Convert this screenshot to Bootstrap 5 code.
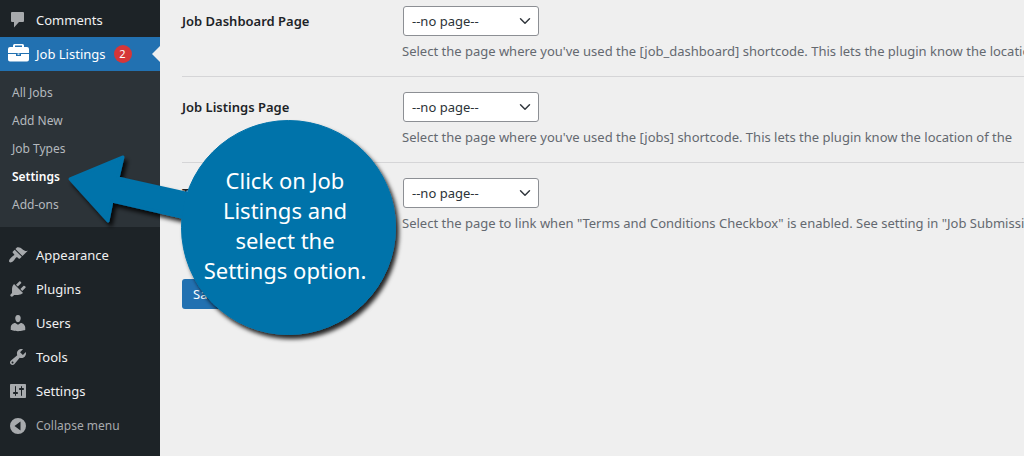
<!DOCTYPE html>
<html lang="en">
<head>
<meta charset="utf-8">
<meta name="viewport" content="width=device-width, initial-scale=1">
<title>Job Listings Settings</title>
<link href="https://cdn.jsdelivr.net/npm/bootstrap@5.3.0/dist/css/bootstrap.min.css" rel="stylesheet">
<style>
  body { font-family: "Noto Sans", "Open Sans", sans-serif; font-size: 13px; line-height: 18px; background: #efefef; color: #1d2327; }
  .admin-menu { flex: 0 0 160px; background: #1d2327; padding-top: 3px; }
  .menu-link { height: 34px; gap: 8px; padding-left: 8px; font-size: 13px; color: #f0f0f1; text-decoration: none; border: 0; background: none; }
  .menu-link svg { flex: 0 0 20px; width: 20px; height: 20px; fill: #a7aaad; }
  .menu-link.current { background: #2271b1; color: #fff; }
  .menu-link.current svg { fill: #fff; }
  .menu-link.current::after { content: ""; position: absolute; right: 0; top: 9px; border: 8px solid transparent; border-right-color: #efefef; border-left: 0; }
  .count { width: 18px; height: 18px; border-radius: 9px; background: #d63638; font-size: 11px; line-height: 18px; }
  .submenu { background: #2c3338; padding: 8px 0; margin-bottom: 11px; }
  .submenu a { display: flex; align-items: center; height: 28px; padding-left: 12px; color: #b4b9be; font-size: 12px; text-decoration: none; }
  .submenu a.current { color: #fff; font-weight: 600; }
  .collapse-btn { height: 36px; color: #a7aaad; font-size: 12px; }
  .settings { padding: 6px 0 0 22px; }
  .setting + .setting { border-top: 1px solid #d5d5d7; padding-top: 15px; }
  .setting { padding-bottom: 15px; }
  .setting-label { flex: 0 0 221px; font-size: 13px; font-weight: 600; line-height: 30px; }
  .page-select { width: 136px; height: 30px; padding: 0 24px 0 8px; border: 1px solid #8c8f94; border-radius: 3px; font-size: 13px; line-height: 28px; color: #2c3338; background-size: 12px 12px; background-position: right 7px center; }
  .hint { margin: 6px 0 0 -1px; color: #646970; font-size: 13px; line-height: 19px; }
  .save-btn { height: 30px; padding: 0 10px; border-radius: 3px; font-size: 13px; line-height: 28px; background: #2271b1; color: #fff; margin-top: 31px; }
  .callout { left: 60px; top: 110px; width: 350px; height: 240px; pointer-events: none; }
  .callout p { left: 117px; top: 55px; width: 216px; color: #fff; font-size: 22px; line-height: 30px; }
</style>
</head>
<body>
<div class="d-flex min-vh-100 position-relative overflow-hidden">
  <nav class="admin-menu" aria-label="Admin menu">
    <a href="#" class="menu-link d-flex align-items-center"><svg viewBox="0 0 20 20"><path d="M4 2h11q1 0 1 1v8q0 1-1 1h-4l-5 5.500v-5.500H4q-1 0-1-1V3q0-1 1-1z"/></svg>Comments</a>
    <a href="#" class="menu-link current d-flex align-items-center position-relative"><svg viewBox="0 0 20 20" overflow="visible"><path fill-rule="evenodd" d="M5 3V1.500Q5 0 6.500 0h8Q16 0 16 1.500V3h3q2 0 2 2v4H0V5q0-2 2-2zM7 1.500V3h7V1.500zM0 10h8v2h5v-2h8v5.500q0 2-2 2H2q-2 0-2-2zM9.500 9.500h2v1.300h-2z"/></svg>Job Listings <span class="count text-center">2</span></a>
    <div class="submenu">
      <a href="#">All Jobs</a>
      <a href="#">Add New</a>
      <a href="#">Job Types</a>
      <a href="#" class="current" aria-current="page">Settings</a>
      <a href="#">Add-ons</a>
    </div>
    <a href="#" class="menu-link d-flex align-items-center"><svg viewBox="0 0 20 20"><path d="M14.480 11.060 7.410 3.990l1.500-1.500c.5-.56 2.300-.47 3.510.32 1.210.8 1.430 1.280 2.910 2.100 1.180.64 2.450 1.260 4.450.85zm-.71.71L6.700 4.700 4.930 6.470c-.39.39-.39 1.020 0 1.410l1.060 1.060c.39.39.39 1.030 0 1.420-.6.600-1.430 1.110-2.210 1.690-.35.260-.7.530-1.010.840C1.430 14.230.4 16.080 1.400 17.070c.990 1 2.840-.03 4.180-1.360.310-.310.580-.660.850-1.020.570-.780 1.080-1.610 1.690-2.210.390-.390 1.020-.390 1.410 0l1.060 1.060c.390.390 1.020.390 1.410 0z"/></svg>Appearance</a>
    <a href="#" class="menu-link d-flex align-items-center"><svg viewBox="0 0 20 20"><path d="M13.110 4.360 9.870 7.600 8 5.730l3.240-3.240c.350-.340 1.050-.2 1.560.320.520.510.660 1.210.310 1.550zm-8 1.770.910-1.120 9.010 9.010-1.190.840c-.710.710-2.630 1.160-3.820 1.160H6.140L4.900 17.260c-.590.590-1.540.590-2.120 0-.590-.580-.590-1.530 0-2.120l1.240-1.240v-3.880c0-1.130.400-3.190 1.090-3.890zm7.260 3.970 3.240-3.240c.340-.350 1.040-.210 1.550.310.520.510.660 1.210.310 1.550l-3.240 3.250z"/></svg>Plugins</a>
    <a href="#" class="menu-link d-flex align-items-center"><svg viewBox="0 0 20 20"><path d="M10 9.250c-2.270 0-2.730-3.440-2.730-3.440C7 4.020 7.820 2 9.970 2c2.160 0 2.980 2.020 2.710 3.810 0 0-.41 3.440-2.680 3.440zm0 2.570L12.720 10c2.390 0 4.520 2.330 4.520 4.530v2.490s-3.650 1.130-7.240 1.130c-3.650 0-7.240-1.130-7.240-1.130v-2.490c0-2.250 1.940-4.480 4.470-4.480z"/></svg>Users</a>
    <a href="#" class="menu-link d-flex align-items-center"><svg viewBox="0 0 20 20"><path d="M16.680 9.770c-1.340 1.340-3.300 1.670-4.950.99l-5.410 6.520c-.99.990-2.590.990-3.580 0s-.99-2.590 0-3.570l6.520-5.420c-.68-1.650-.35-3.610.99-4.950 1.280-1.280 3.120-1.620 4.720-1.060l-2.890 2.890 2.820 2.820 2.860-2.870c.53 1.580.180 3.390-1.080 4.650zM3.810 16.210c.400.390 1.040.390 1.430 0 .400-.400.400-1.040 0-1.430-.390-.400-1.030-.400-1.430 0-.390.390-.390 1.030 0 1.430z"/></svg>Tools</a>
    <a href="#" class="menu-link d-flex align-items-center"><svg viewBox="0 0 20 20"><path d="M18 16V4c0-.55-.45-1-1-1H3c-.55 0-1 .450-1 1v12c0 .550.450 1 1 1h14c.550 0 1-.450 1-1zM8 11h1c.550 0 1 .450 1 1s-.450 1-1 1H8v1.500c0 .280-.220.500-.500.500s-.500-.220-.500-.500V13H6c-.550 0-1-.450-1-1s.450-1 1-1h1V5.500c0-.280.220-.500.500-.500s.500.220.500.500zm5-2h-1c-.550 0-1-.450-1-1s.450-1 1-1h1V5.500c0-.280.220-.500.500-.500s.500.220.500.500V7h1c.550 0 1 .450 1 1s-.450 1-1 1h-1v5.500c0 .280-.220.500-.500.500s-.500-.220-.500-.500z"/></svg>Settings</a>
    <button type="button" class="menu-link collapse-btn d-flex align-items-center w-100"><svg viewBox="0 0 20 20"><path fill-rule="evenodd" d="M10 2a8 8 0 1 0 0 16 8 8 0 0 0 0-16zM12.500 5.500v9L6.500 10z"/></svg>Collapse menu</button>
  </nav>

  <main class="settings flex-grow-1 overflow-hidden">
    <form>
      <div class="setting d-flex">
        <label class="setting-label" for="dashboard-page">Job Dashboard Page</label>
        <div class="text-nowrap">
          <select class="form-select page-select" id="dashboard-page"><option>--no page--</option></select>
          <p class="hint">Select the page where you've used the [job_dashboard] shortcode. This lets the plugin know the location</p>
        </div>
      </div>
      <div class="setting d-flex">
        <label class="setting-label" for="listings-page">Job Listings Page</label>
        <div class="text-nowrap">
          <select class="form-select page-select" id="listings-page"><option>--no page--</option></select>
          <p class="hint">Select the page where you've used the [jobs] shortcode. This lets the plugin know the location of the</p>
        </div>
      </div>
      <div class="setting d-flex">
        <label class="setting-label" for="terms-page">Terms Page</label>
        <div class="text-nowrap">
          <select class="form-select page-select" id="terms-page"><option>--no page--</option></select>
          <p class="hint">Select the page to link when "Terms and Conditions Checkbox" is enabled. See setting in "Job Submission"</p>
        </div>
      </div>
      <button type="button" class="btn save-btn">Save</button>
    </form>
  </main>

  <div class="callout position-absolute">
    <svg width="350" height="240" viewBox="60 110 350 240" aria-hidden="true">
      <defs><filter id="shade" x="-10%" y="-10%" width="125%" height="125%"><feDropShadow dx="3" dy="4" stdDeviation="2" flood-color="#000" flood-opacity=".85"/></filter></defs>
      <g fill="#0073aa" stroke="#0073aa" stroke-linejoin="round" filter="url(#shade)">
        <path stroke-width="3" d="M70 179 123 157 118 178 190 194V219L112 201 108 221Z"/>
        <circle cx="288.500" cy="227.500" r="107"/>
      </g>
    </svg>
    <p class="position-absolute text-center m-0">Click on Job<br>Listings and<br>select the<br>Settings option.</p>
  </div>
</div>
<script src="https://cdn.jsdelivr.net/npm/bootstrap@5.3.0/dist/js/bootstrap.bundle.min.js"></script>
</body>
</html>
